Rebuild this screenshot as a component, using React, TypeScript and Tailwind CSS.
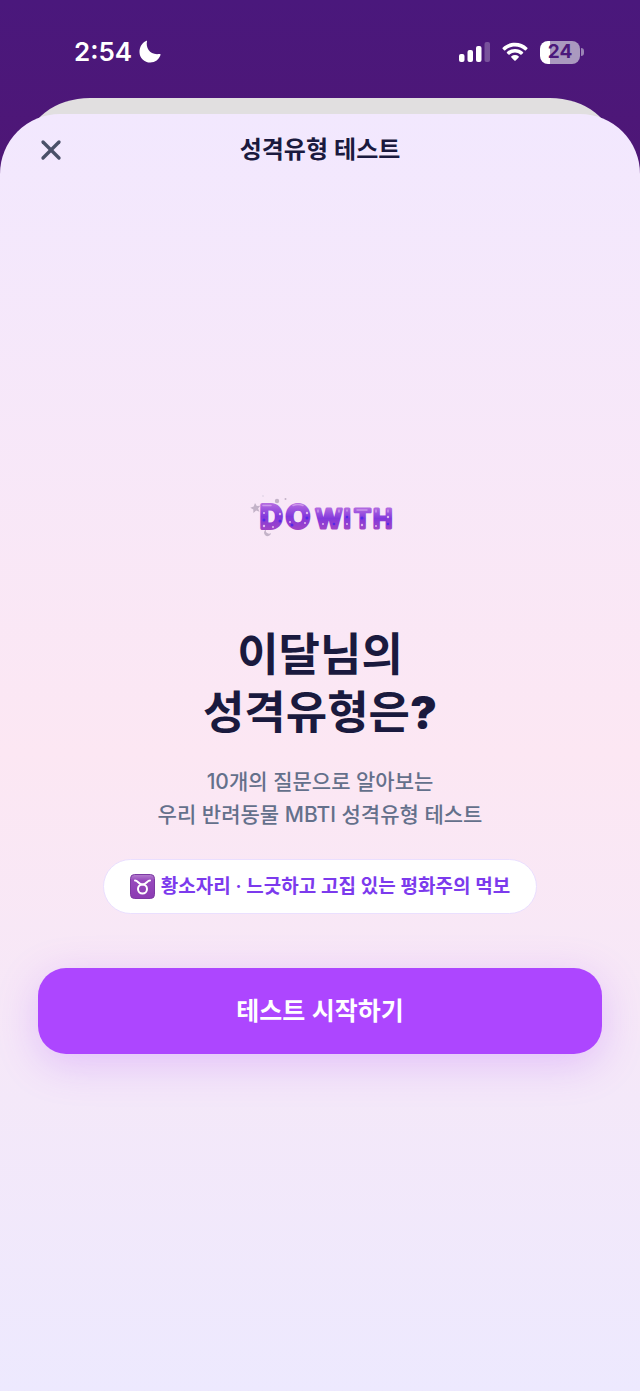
import React from 'react';
import { X } from 'lucide-react';

function StatusBar() {
  return (
    <div className="flex h-[98px] items-center justify-between pl-[74px] pr-14 pt-1.5 text-white">
      <div className="flex items-center gap-1.5">
        <span className="text-[26px] font-semibold leading-8">2:54</span>
        <svg className="h-6 w-6" viewBox="0 0 24 24" fill="currentColor" aria-label="방해금지 모드">
          <path d="M9 1.200C7.500 7.700 12 15.200 21 14c1.200-.2 1.800.2 1.500 1.100-1.400 4.400-5.400 7.500-10.200 7.500C6.400 22.600 1.500 18 1.500 12c0-4.900 2.600-9.300 6.500-11 .8-.3 1.200-.4 1 .200Z" />
        </svg>
      </div>

      <div className="flex items-center gap-3">
        <svg className="h-5 w-8" viewBox="0 0 32 20" fill="currentColor" aria-label="신호 세기">
          <rect x="1" y="12" width="5.500" height="8" rx="2" />
          <rect x="9.500" y="8" width="5.500" height="12" rx="2" />
          <rect x="18" y="4" width="5.500" height="16" rx="2" />
          <rect x="26.500" y="0" width="5.500" height="20" rx="2" opacity="0.25" />
        </svg>
        <svg className="h-5 w-[26px]" viewBox="0 0 28 20" fill="currentColor" aria-label="와이파이">
          <path d="M14 0C8.800 0 4.100 2 .7 5.300c-.4.4-.4.900 0 1.300l1.500 1.500c.4.400.9.400 1.300 0C6.300 5.500 10 4 14 4s7.700 1.500 10.500 4.100c.4.400.9.400 1.300 0l1.500-1.500c.4-.4.4-.9 0-1.300C23.900 2 19.200 0 14 0Z" />
          <path d="M14 6.700c-3.300 0-6.300 1.200-8.600 3.300-.4.4-.4.900 0 1.300l1.600 1.500c.4.400.8.400 1.200 0 1.600-1.400 3.600-2.200 5.800-2.200s4.200.8 5.800 2.200c.4.400.8.400 1.200 0l1.600-1.500c.4-.4.4-.9 0-1.300-2.300-2.100-5.300-3.300-8.600-3.300Z" />
          <path d="M14 13.300c-1.500 0-2.800.5-3.900 1.400-.4.4-.4.900 0 1.200l3.200 3.200c.4.500 1 .5 1.400 0l3.200-3.200c.4-.3.4-.8 0-1.200-1.100-.9-2.400-1.400-3.900-1.400Z" />
        </svg>
        <div className="flex items-center gap-px">
          <div className="flex h-[23px] w-10 items-center justify-center rounded-lg bg-linear-to-r from-white from-25% to-[#aa99bf] to-25% text-[19px] font-bold leading-6 text-[#4b187a]">
            24
          </div>
          <div className="h-2 w-[3px] rounded-r-full bg-[#9a83b5]" />
        </div>
      </div>
    </div>
  );
}

function DowithLogo() {
  return (
    <svg className="h-12 w-36 overflow-visible" viewBox="0 0 144 48" role="img" aria-label="DOWITH">
      <defs>
        <linearGradient id="balloon" x1="0" y1="0" x2="0" y2="1">
          <stop offset="0.15" stopColor="#b46be0" />
          <stop offset="0.5" stopColor="#8238dc" />
          <stop offset="0.85" stopColor="#a045c6" />
        </linearGradient>
      </defs>
      <g fill="#c3b3c8">
        <path d="m7 10 1.800 3 3.500-.3-2.200 2.800 1.400 3.200-3.400-1.100L5.400 20l-.1-3.500-3-1.800 3.400-1.200Z" />
        <circle cx="29" cy="8" r="2.200" />
        <circle cx="37.500" cy="6" r="1" />
        <path d="M18 36.500a3.500 3.500 0 1 0 5 3.500 3.200 3.200 0 0 1-5-3.500Z" />
      </g>
      <circle cx="15" cy="3" r="1" fill="#e6d9ea" />
      <g
        fontFamily="Inter, sans-serif"
        fontWeight="600"
        fill="url(#balloon)"
        stroke="url(#balloon)"
        strokeWidth="4"
        strokeLinejoin="round"
      >
        <text x="12 38" y="35" fontSize="31">DO</text>
        <text x="67.500 95.500 106 125" y="35" fontSize="26" strokeWidth="3">WITH</text>
      </g>
      <g fill="none" stroke="#d3a2ee" strokeWidth="1.500" strokeLinecap="round" opacity="0.8">
        <path d="M15 12.500h8M45 12.500q5-2 10 0M70 17v2M91 17v2M99 17v1M109 17h10M128 17v2M140 17v2" />
      </g>
      <g fill="#e0b9ee">
        <circle cx="16" cy="20" r="1" />
        <circle cx="32" cy="21" r="1.200" />
        <circle cx="16" cy="33" r="1.200" />
        <circle cx="25" cy="34" r="1" />
        <circle cx="42" cy="29" r="1" />
        <circle cx="59" cy="20" r="1.200" />
        <circle cx="57" cy="30" r="1" />
        <circle cx="75" cy="31" r="1" />
        <circle cx="99" cy="31" r="1" />
        <circle cx="114" cy="32" r="1.200" />
        <circle cx="128" cy="33" r="1" />
        <circle cx="140" cy="24" r="1.200" />
      </g>
      <g fill="#5429e8">
        <circle cx="16" cy="27" r="1.500" />
        <circle cx="32" cy="28" r="1.500" />
        <circle cx="44" cy="32" r="1.500" />
        <circle cx="59" cy="25" r="1.500" />
        <circle cx="86" cy="31" r="1.300" />
        <circle cx="99" cy="24" r="1.300" />
        <circle cx="114" cy="25" r="1.500" />
        <circle cx="140" cy="31" r="1.300" />
      </g>
    </svg>
  );
}

function TaurusIcon() {
  return (
    <svg className="h-[25px] w-[25px]" viewBox="0 0 25 25" aria-label="황소자리">
      <defs>
        <linearGradient id="taurus" x1="0" y1="0" x2="0" y2="1">
          <stop offset="0" stopColor="#b47fce" />
          <stop offset="0.25" stopColor="#9749bd" />
          <stop offset="1" stopColor="#8b3bb2" />
        </linearGradient>
      </defs>
      <rect x="0.500" y="0.500" width="24" height="24" rx="4" fill="url(#taurus)" stroke="#7d3aa3" />
      <g fill="none" stroke="#fff" strokeWidth="2" strokeLinecap="round">
        <circle cx="12.500" cy="15" r="4.500" />
        <path d="M5 6.500c3 0 3.500 4 7.500 4s4.500-4 7.500-4" />
      </g>
    </svg>
  );
}

export default function App() {
  return (
    <div
      lang="ko"
      className="flex min-h-screen flex-col bg-linear-to-b from-[#4a187c] to-[#4f1675] to-[200px] font-['Inter','Noto_Sans_CJK_KR',sans-serif]"
    >
      <StatusBar />

      {/* Sheet underneath */}
      <div className="mx-[26px] -mb-10 h-14 rounded-t-[64px_50px] bg-[#e1dfe0]" />

      <main className="relative flex flex-1 flex-col rounded-t-[60px] bg-linear-to-b from-[#f2e8fe] via-[#fce7f3] to-[#ede9fe]">
        <header className="grid grid-cols-[32px_1fr_32px] items-center px-[35px] pt-5">
          <button type="button" aria-label="닫기" className="flex h-8 w-8 items-center justify-center text-[#4a5068]">
            <X className="h-8 w-8" strokeWidth={2.5} />
          </button>
          <h1 className="text-center text-2xl font-semibold text-[#1a1a3e]">성격유형 테스트</h1>
        </header>

        <section className="flex flex-1 flex-col items-center justify-center px-[38px] pb-2.5 text-center">
          <DowithLogo />
          <h2 className="mt-[85px] text-[45px] font-bold leading-[58px] text-[#1a1a3e]">
            이달님의
            <br />
            성격유형은<span className="font-black">?</span>
          </h2>
          <p className="mt-[23px] text-[21px] font-medium leading-[33px] text-[#64708b]">
            10개의 질문으로 알아보는
            <br />
            우리 반려동물 MBTI 성격유형 테스트
          </p>
          <div className="mt-7 flex h-[55px] items-center gap-1.5 rounded-full border border-[#eadfff] bg-white px-[26px] text-[19px] font-semibold text-[#7c3aed]">
            <TaurusIcon />
            <span className="pt-0.5">황소자리 · 느긋하고 고집 있는 평화주의 먹보</span>
          </div>
          <button
            type="button"
            className="mt-[54px] h-[86px] w-full rounded-[28px] bg-[#ad46ff] pt-0.5 text-[25px] font-semibold text-white shadow-[0_10px_40px_rgba(173,70,255,0.25)]"
          >
            테스트 시작하기
          </button>
        </section>
      </main>
    </div>
  );
}
